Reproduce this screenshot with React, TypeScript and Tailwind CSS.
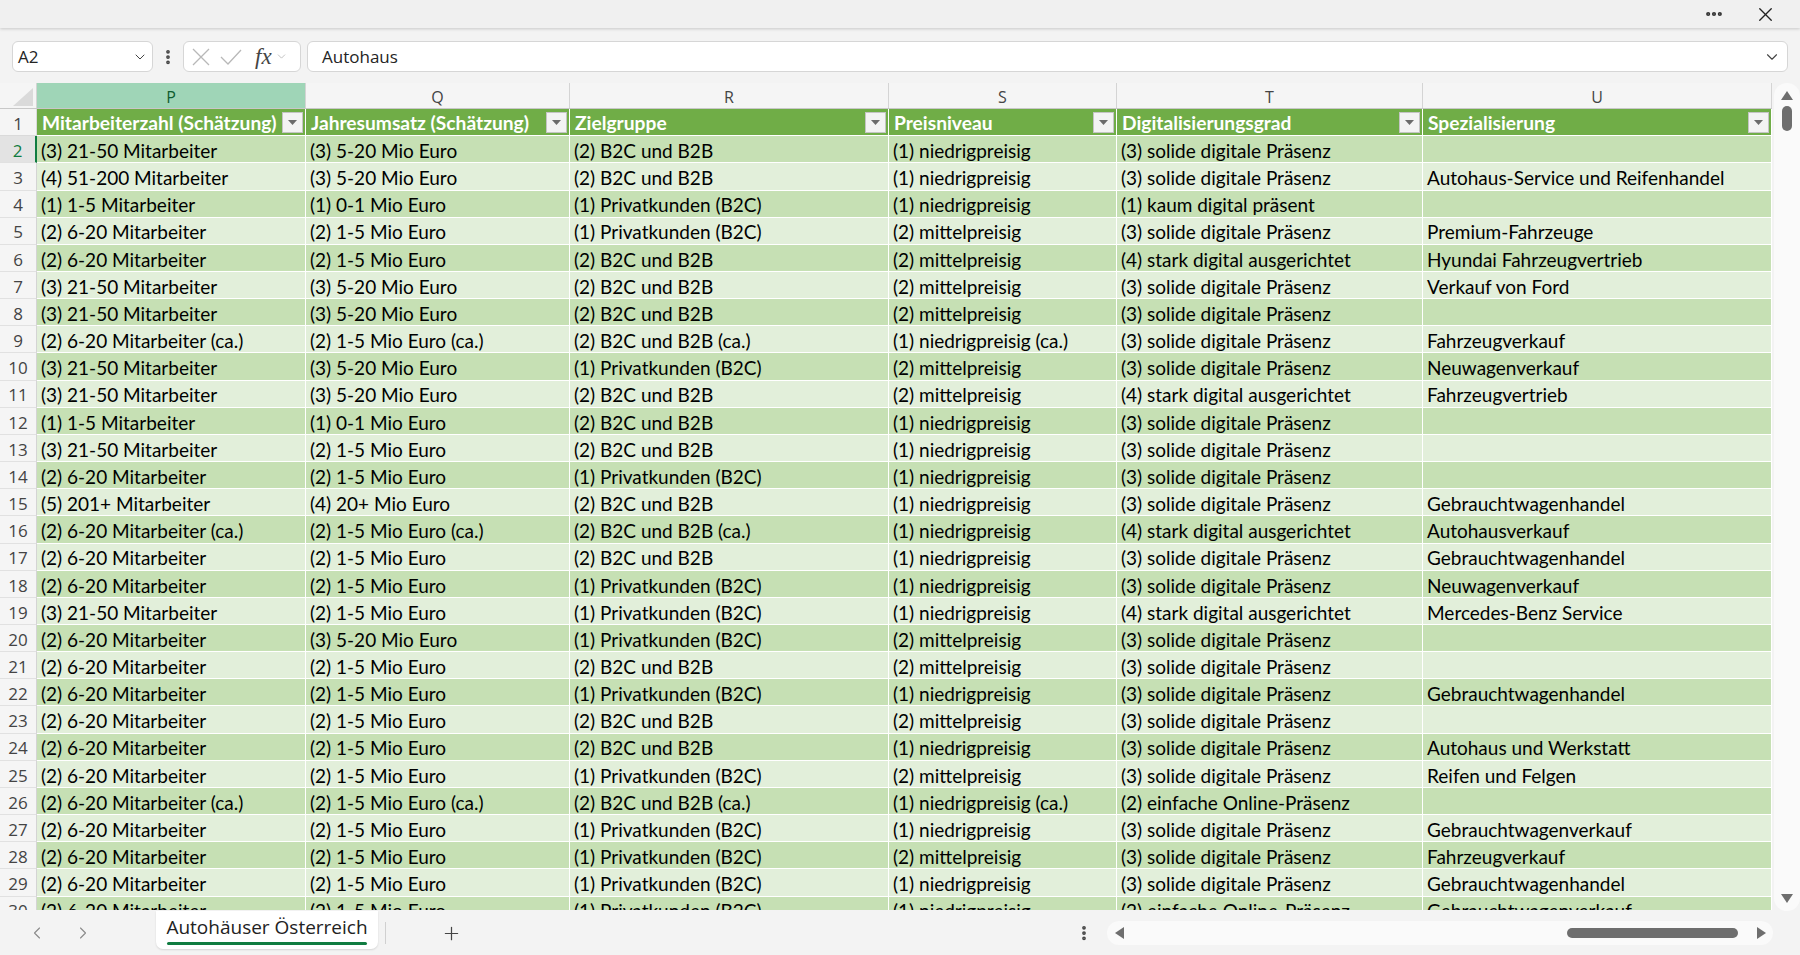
import { ChevronDown, ChevronLeft, ChevronRight, Plus, X, MoreHorizontal, MoreVertical } from "lucide-react";

const cellFont = { fontFamily: "Lato, 'Open Sans', sans-serif" };

const COLS = [
  { key: "P", w: "w-[269px]", title: "Mitarbeiterzahl (Schätzung)" },
  { key: "Q", w: "w-[264px]", title: "Jahresumsatz (Schätzung)" },
  { key: "R", w: "w-[319px]", title: "Zielgruppe" },
  { key: "S", w: "w-[228px]", title: "Preisniveau" },
  { key: "T", w: "w-[306px]", title: "Digitalisierungsgrad" },
  { key: "U", w: "w-[349px]", title: "Spezialisierung" },
];

const M3 = "(3) 21-50 Mitarbeiter";
const M2 = "(2) 6-20 Mitarbeiter";
const E3 = "(3) 5-20 Mio Euro";
const E2 = "(2) 1-5 Mio Euro";
const BB = "(2) B2C und B2B";
const PK = "(1) Privatkunden (B2C)";
const NP = "(1) niedrigpreisig";
const MP = "(2) mittelpreisig";
const SD = "(3) solide digitale Präsenz";
const ST = "(4) stark digital ausgerichtet";

const ROWS: string[][] = [
  [M3, E3, BB, NP, SD, ""],
  ["(4) 51-200 Mitarbeiter", E3, BB, NP, SD, "Autohaus-Service und Reifenhandel"],
  ["(1) 1-5 Mitarbeiter", "(1) 0-1 Mio Euro", PK, NP, "(1) kaum digital präsent", ""],
  [M2, E2, PK, MP, SD, "Premium-Fahrzeuge"],
  [M2, E2, BB, MP, ST, "Hyundai Fahrzeugvertrieb"],
  [M3, E3, BB, MP, SD, "Verkauf von Ford"],
  [M3, E3, BB, MP, SD, ""],
  ["(2) 6-20 Mitarbeiter (ca.)", "(2) 1-5 Mio Euro (ca.)", "(2) B2C und B2B (ca.)", "(1) niedrigpreisig (ca.)", SD, "Fahrzeugverkauf"],
  [M3, E3, PK, MP, SD, "Neuwagenverkauf"],
  [M3, E3, BB, MP, ST, "Fahrzeugvertrieb"],
  ["(1) 1-5 Mitarbeiter", "(1) 0-1 Mio Euro", BB, NP, SD, ""],
  [M3, E2, BB, NP, SD, ""],
  [M2, E2, PK, NP, SD, ""],
  ["(5) 201+ Mitarbeiter", "(4) 20+ Mio Euro", BB, NP, SD, "Gebrauchtwagenhandel"],
  ["(2) 6-20 Mitarbeiter (ca.)", "(2) 1-5 Mio Euro (ca.)", "(2) B2C und B2B (ca.)", NP, ST, "Autohausverkauf"],
  [M2, E2, BB, NP, SD, "Gebrauchtwagenhandel"],
  [M2, E2, PK, NP, SD, "Neuwagenverkauf"],
  [M3, E2, PK, NP, ST, "Mercedes-Benz Service"],
  [M2, E3, PK, MP, SD, ""],
  [M2, E2, BB, MP, SD, ""],
  [M2, E2, PK, NP, SD, "Gebrauchtwagenhandel"],
  [M2, E2, BB, MP, SD, ""],
  [M2, E2, BB, NP, SD, "Autohaus und Werkstatt"],
  [M2, E2, PK, MP, SD, "Reifen und Felgen"],
  ["(2) 6-20 Mitarbeiter (ca.)", "(2) 1-5 Mio Euro (ca.)", "(2) B2C und B2B (ca.)", "(1) niedrigpreisig (ca.)", "(2) einfache Online-Präsenz", ""],
  [M2, E2, PK, NP, SD, "Gebrauchtwagenverkauf"],
  [M2, E2, PK, MP, SD, "Fahrzeugverkauf"],
  [M2, E2, PK, NP, SD, "Gebrauchtwagenhandel"],
  [M2, E2, PK, NP, "(2) einfache Online-Präsenz", "Gebrauchtwagenverkauf"],
];

const FilterButton = () => (
  <div className="ml-auto mr-[2px] w-[21px] h-[21px] shrink-0 bg-[#f3f3f3] border border-[#c4c4c4] flex items-center justify-center">
    <svg width="9" height="5" viewBox="0 0 9 5">
      <path d="M0 0 L9 0 L4.5 5 Z" fill="#6b6b6b" />
    </svg>
  </div>
);

const Triangle = ({ dir }: { dir: "up" | "down" | "left" | "right" }) => {
  const d = {
    up: "M0 9 L6 0 L12 9 Z",
    down: "M0 0 L12 0 L6 9 Z",
    left: "M9 0 L9 12 L0 6 Z",
    right: "M0 0 L9 6 L0 12 Z",
  }[dir];
  const horiz = dir === "left" || dir === "right";
  return (
    <svg width={horiz ? 9 : 12} height={horiz ? 12 : 9} viewBox={horiz ? "0 0 9 12" : "0 0 12 9"}>
      <path d={d} fill="#6e6e6e" strokeLinejoin="round" />
    </svg>
  );
};

export default function App() {
  return (
    <div
      className="w-[1800px] h-[955px] bg-[#f3f3f3] flex flex-col overflow-hidden text-[#242424]"
      style={{ fontFamily: "'Open Sans', 'Noto Sans', sans-serif" }}
    >
      {/* Title strip */}
      <div className="h-[28px] shrink-0 bg-[#f0f0f0] flex items-center justify-end shadow-[0_1px_3px_rgba(0,0,0,0.18)] relative z-10">
        <MoreHorizontal size={20} strokeWidth={3} className="text-[#333] mr-[30px]" />
        <X size={23} strokeWidth={1.4} className="text-[#222] mr-[23px]" />
      </div>

      {/* Formula bar */}
      <div className="h-[55px] shrink-0 flex items-start pt-[13px] pl-[12px] pr-[12px]">
        <div className="w-[141px] h-[31px] bg-white border border-[#d6d6d6] rounded-[6px] flex items-center pl-[5px] pr-[4px]">
          <span className="text-[17px]">A2</span>
          <ChevronDown size={16} strokeWidth={1.5} className="ml-auto text-[#444]" />
        </div>
        <div className="w-[30px] h-[31px] flex items-center justify-center">
          <MoreVertical size={18} strokeWidth={3} className="text-[#444]" />
        </div>
        <div className="w-[118px] h-[31px] bg-white border border-[#d6d6d6] rounded-[6px] flex items-center pl-[8px]">
          <svg width="18" height="18" viewBox="0 0 18 18">
            <path d="M1 1 L17 17 M17 1 L1 17" stroke="#b8b8b8" strokeWidth="1.3" fill="none" />
          </svg>
          <svg width="22" height="16" viewBox="0 0 22 16" className="ml-[10px]">
            <path d="M1 8 L8 15 L21 1" stroke="#b8b8b8" strokeWidth="1.3" fill="none" />
          </svg>
          <span
            className="ml-[13px] text-[23px] italic text-[#444] leading-none"
            style={{ fontFamily: "'Liberation Serif', serif" }}
          >
            fx
          </span>
          <ChevronDown size={13} strokeWidth={1.3} className="ml-[3px] text-[#aaa]" />
        </div>
        <div className="ml-[6px] flex-1 h-[31px] bg-white border border-[#d6d6d6] rounded-[6px] flex items-center pl-[14px] pr-[6px]">
          <span className="text-[17px]">Autohaus</span>
          <ChevronDown size={18} strokeWidth={1.5} className="ml-auto text-[#444]" />
        </div>
      </div>

      {/* Grid + vertical scrollbar */}
      <div className="h-[828px] shrink-0 flex">
        <div className="w-[1772px] h-[827px] overflow-hidden bg-white flex flex-col">
          {/* column letters */}
          <div className="h-[26px] shrink-0 flex bg-[#f5f5f5] border-b border-[#c8c8c8]">
            <div className="w-[37px] shrink-0 border-r border-[#d4d4d4] flex items-end justify-end pr-[3px] pb-[2px]">
              <svg width="20" height="18" viewBox="0 0 20 18">
                <path d="M20 0 L20 18 L0 18 Z" fill="#dadada" />
              </svg>
            </div>
            {COLS.map((c) => (
              <div
                key={c.key}
                className={`${c.w} shrink-0 border-r border-[#d4d4d4] flex items-center justify-center pt-[2px] text-[16px] ${
                  c.key === "P" ? "bg-[#9fd5b7] text-[#0e5c2f]" : "text-[#444]"
                }`}
              >
                {c.key}
              </div>
            ))}
          </div>

          {/* header row 1 */}
          <div className="h-[27.2px] shrink-0 flex">
            <div className="w-[37px] shrink-0 bg-[#f5f5f5] border-r border-b border-[#dadada] flex items-center justify-center pt-[3px] text-[17px] text-[#444]">
              1
            </div>
            {COLS.map((c) => (
              <div
                key={c.key}
                className={`${c.w} shrink-0 bg-[#70ad47] border-r border-b border-white flex items-center pl-[5px] text-white font-bold text-[19.2px]`}
                style={cellFont}
              >
                <span className="whitespace-nowrap pt-[3px]">{c.title}</span>
                <FilterButton />
              </div>
            ))}
          </div>

          {/* data rows */}
          {ROWS.map((r, i) => {
            const n = i + 2;
            const sel = n === 2;
            return (
              <div key={n} className="h-[27.17px] shrink-0 flex">
                <div
                  className={`w-[37px] shrink-0 flex items-center justify-center pt-[3px] text-[17px] border-b border-[#e1e1e1] ${
                    sel
                      ? "bg-[#e3e3e3] text-[#107c41] border-r-2 border-r-[#107c41]"
                      : "bg-[#f5f5f5] text-[#444] border-r border-r-[#d4d4d4]"
                  }`}
                >
                  {n}
                </div>
                {COLS.map((c, j) => (
                  <div
                    key={c.key}
                    className={`${c.w} shrink-0 border-r border-b border-white flex items-center pl-[4px] pt-[4px] text-[19px] text-black whitespace-nowrap overflow-hidden ${
                      n % 2 === 0 ? "bg-[#c6e0b4]" : "bg-[#e2efda]"
                    }`}
                    style={cellFont}
                  >
                    {r[j]}
                  </div>
                ))}
              </div>
            );
          })}
        </div>
        <div className="w-[28px] shrink-0 pl-[2px]">
          <div className="w-[26px] h-[828px] bg-[#fafafa] rounded-[13px] flex flex-col items-center pt-[8px] pb-[8px]">
            <Triangle dir="up" />
            <div className="mt-[6px] w-[10px] h-[25px] rounded-full bg-[#6e6e6e]" />
            <div className="flex-1" />
            <Triangle dir="down" />
          </div>
        </div>
      </div>

      {/* Sheet tabs + horizontal scrollbar */}
      <div className="flex-1 flex items-center">
        <div className="w-[156px] shrink-0 flex items-center">
          <ChevronLeft size={20} strokeWidth={1.3} className="ml-[27px] text-[#8a8a8a]" />
          <ChevronRight size={20} strokeWidth={1.3} className="ml-[26px] text-[#8a8a8a]" />
        </div>
        <div className="w-[222px] h-[38px] self-start bg-white rounded-b-[7px] shadow-[0_1px_2px_rgba(0,0,0,0.12)] flex flex-col items-center justify-center">
          <span className="text-[19px] leading-[25px] text-[#222]">Autohäuser Österreich</span>
          <div className="mt-[2px] w-[200px] h-[3px] bg-[#107c41] rounded-full" />
        </div>
        <div className="ml-[7px] w-px h-[22px] bg-[#d0d0d0]" />
        <Plus size={21} strokeWidth={1.4} className="ml-[55px] text-[#444]" />
        <div className="flex-1" />
        <div className="w-[20px] flex justify-center">
          <MoreVertical size={18} strokeWidth={3} className="text-[#444]" />
        </div>
        <div className="ml-[13px] w-[666px] h-[24px] bg-[#fafafa] rounded-full flex items-center pl-[8px] pr-[7px]">
          <Triangle dir="left" />
          <div className="flex-1" />
          <div className="w-[171px] h-[10px] rounded-full bg-[#6e6e6e]" />
          <div className="w-[19px]" />
          <Triangle dir="right" />
        </div>
        <div className="w-[27px] shrink-0" />
      </div>
    </div>
  );
}
